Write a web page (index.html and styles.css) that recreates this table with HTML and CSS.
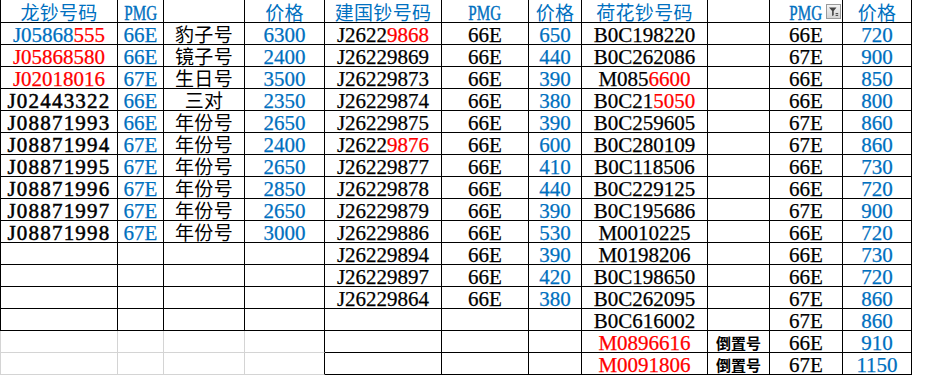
FILE: index.html
```html
<!DOCTYPE html>
<html lang="zh">
<head>
<meta charset="utf-8">
<title>钞号价格表</title>
<link rel="stylesheet" href="styles.css">
</head>
<body>
<div class="sheet">
  <!-- header -->
  <div class="c h b">龙钞号码</div>
  <div class="c b"><span class="pmg">PMG</span></div>
  <div class="c"></div>
  <div class="c h b">价格</div>
  <div class="c h b">建国钞号码</div>
  <div class="c b"><span class="pmg">PMG</span></div>
  <div class="c h b">价格</div>
  <div class="c h b">荷花钞号码</div>
  <div class="c"></div>
  <div class="c b"><span class="pmg">PMG</span><span class="filter"><svg viewBox="0 0 13 13" width="13" height="13"><path d="M2 2.5h7.5L6.7 6v4.2L5.1 11V6z" fill="#444"/><path d="M8.6 8.6h2.6M8.6 10.4h2.6" stroke="#444" stroke-width="1"/></svg></span></div>
  <div class="c h b">价格</div>

  <!-- row 1 -->
  <div class="c b">J05868<span class="r">555</span></div>
  <div class="c b">66E</div>
  <div class="c h">豹子号</div>
  <div class="c b">6300</div>
  <div class="c">J2622<span class="r">9868</span></div>
  <div class="c">66E</div>
  <div class="c b">650</div>
  <div class="c">B0C198220</div>
  <div class="c"></div>
  <div class="c">66E</div>
  <div class="c b">720</div>

  <!-- row 2 -->
  <div class="c r">J05868580</div>
  <div class="c b">66E</div>
  <div class="c h">镜子号</div>
  <div class="c b">2400</div>
  <div class="c">J26229869</div>
  <div class="c">66E</div>
  <div class="c b">440</div>
  <div class="c">B0C262086</div>
  <div class="c"></div>
  <div class="c">67E</div>
  <div class="c b">900</div>

  <!-- row 3 -->
  <div class="c r">J02018016</div>
  <div class="c b">67E</div>
  <div class="c h">生日号</div>
  <div class="c b">3500</div>
  <div class="c">J26229873</div>
  <div class="c">66E</div>
  <div class="c b">390</div>
  <div class="c">M085<span class="r">6600</span></div>
  <div class="c"></div>
  <div class="c">66E</div>
  <div class="c b">850</div>

  <!-- row 4 -->
  <div class="c wide">J02443322</div>
  <div class="c b">66E</div>
  <div class="c h">三对</div>
  <div class="c b">2350</div>
  <div class="c">J26229874</div>
  <div class="c">66E</div>
  <div class="c b">380</div>
  <div class="c">B0C21<span class="r">5050</span></div>
  <div class="c"></div>
  <div class="c">66E</div>
  <div class="c b">800</div>

  <!-- row 5 -->
  <div class="c wide">J08871993</div>
  <div class="c b">66E</div>
  <div class="c h">年份号</div>
  <div class="c b">2650</div>
  <div class="c">J26229875</div>
  <div class="c">66E</div>
  <div class="c b">390</div>
  <div class="c">B0C259605</div>
  <div class="c"></div>
  <div class="c">67E</div>
  <div class="c b">860</div>

  <!-- row 6 -->
  <div class="c wide">J08871994</div>
  <div class="c b">67E</div>
  <div class="c h">年份号</div>
  <div class="c b">2400</div>
  <div class="c">J2622<span class="r">9876</span></div>
  <div class="c">66E</div>
  <div class="c b">600</div>
  <div class="c">B0C280109</div>
  <div class="c"></div>
  <div class="c">67E</div>
  <div class="c b">860</div>

  <!-- row 7 -->
  <div class="c wide">J08871995</div>
  <div class="c b">67E</div>
  <div class="c h">年份号</div>
  <div class="c b">2650</div>
  <div class="c">J26229877</div>
  <div class="c">66E</div>
  <div class="c b">410</div>
  <div class="c">B0C118506</div>
  <div class="c"></div>
  <div class="c">66E</div>
  <div class="c b">730</div>

  <!-- row 8 -->
  <div class="c wide">J08871996</div>
  <div class="c b">67E</div>
  <div class="c h">年份号</div>
  <div class="c b">2850</div>
  <div class="c">J26229878</div>
  <div class="c">66E</div>
  <div class="c b">440</div>
  <div class="c">B0C229125</div>
  <div class="c"></div>
  <div class="c">66E</div>
  <div class="c b">720</div>

  <!-- row 9 -->
  <div class="c wide">J08871997</div>
  <div class="c b">67E</div>
  <div class="c h">年份号</div>
  <div class="c b">2650</div>
  <div class="c">J26229879</div>
  <div class="c">66E</div>
  <div class="c b">390</div>
  <div class="c">B0C195686</div>
  <div class="c"></div>
  <div class="c">67E</div>
  <div class="c b">900</div>

  <!-- row 10 -->
  <div class="c wide">J08871998</div>
  <div class="c b">67E</div>
  <div class="c h">年份号</div>
  <div class="c b">3000</div>
  <div class="c">J26229886</div>
  <div class="c">66E</div>
  <div class="c b">530</div>
  <div class="c">M0010225</div>
  <div class="c"></div>
  <div class="c">66E</div>
  <div class="c b">720</div>

  <!-- row 11 -->
  <div class="c"></div>
  <div class="c"></div>
  <div class="c"></div>
  <div class="c"></div>
  <div class="c">J26229894</div>
  <div class="c">66E</div>
  <div class="c b">390</div>
  <div class="c">M0198206</div>
  <div class="c"></div>
  <div class="c">66E</div>
  <div class="c b">730</div>

  <!-- row 12 -->
  <div class="c"></div>
  <div class="c"></div>
  <div class="c"></div>
  <div class="c"></div>
  <div class="c">J26229897</div>
  <div class="c">66E</div>
  <div class="c b">420</div>
  <div class="c">B0C198650</div>
  <div class="c"></div>
  <div class="c">66E</div>
  <div class="c b">720</div>

  <!-- row 13 -->
  <div class="c"></div>
  <div class="c"></div>
  <div class="c"></div>
  <div class="c"></div>
  <div class="c">J26229864</div>
  <div class="c">66E</div>
  <div class="c b">380</div>
  <div class="c">B0C262095</div>
  <div class="c"></div>
  <div class="c">67E</div>
  <div class="c b">860</div>

  <!-- row 14 -->
  <div class="c"></div>
  <div class="c"></div>
  <div class="c"></div>
  <div class="c"></div>
  <div class="c"></div>
  <div class="c"></div>
  <div class="c"></div>
  <div class="c">B0C616002</div>
  <div class="c"></div>
  <div class="c">67E</div>
  <div class="c b">860</div>

  <!-- row 15 -->
  <div class="c g"></div>
  <div class="c g"></div>
  <div class="c g"></div>
  <div class="c g k"></div>
  <div class="c"></div>
  <div class="c"></div>
  <div class="c"></div>
  <div class="c r">M0896616</div>
  <div class="c h small">倒置号</div>
  <div class="c">66E</div>
  <div class="c b">910</div>

  <!-- row 16 -->
  <div class="c g"></div>
  <div class="c g"></div>
  <div class="c g"></div>
  <div class="c g k"></div>
  <div class="c"></div>
  <div class="c"></div>
  <div class="c"></div>
  <div class="c r">M0091806</div>
  <div class="c h small">倒置号</div>
  <div class="c">67E</div>
  <div class="c b">1150</div>
</div>
</body>
</html>
```

FILE: styles.css
```css
html, body {
  margin: 0;
  padding: 0;
  background: #ffffff;
}

.sheet {
  display: grid;
  grid-template-columns: 118px 46px 81px 80px 117px 87px 53px 126px 62px 73px 69px;
  grid-template-rows: 23px repeat(16, 22px);
  width: 912px;
  font-family: "Liberation Serif", "Times New Roman", serif;
  font-size: 21px;
  color: #000000;
  -webkit-text-stroke: 0.25px currentColor;
}

.c {
  box-sizing: border-box;
  border-right: 1px solid #000000;
  border-bottom: 1px solid #000000;
  display: flex;
  align-items: flex-end;
  justify-content: center;
  line-height: 17px;
  white-space: nowrap;
  position: relative;
}

.sheet > .c:nth-child(11n+1) {
  border-left: 1px solid #000000;
}

.c.g {
  border-right-color: #d4d4d4;
  border-bottom-color: #d4d4d4;
}

.sheet > .c.g:nth-child(11n+1) {
  border-left-color: #d4d4d4;
}

.c.g.k {
  border-right-color: #000000;
}

.b {
  color: #0070c0;
}

.r {
  color: #ff0000;
}

.wide {
  letter-spacing: 1.2px;
  -webkit-text-stroke: 0.5px currentColor;
}

.h {
  font-family: "Noto Sans CJK SC", "Noto Sans", sans-serif;
  font-size: 19px;
  line-height: 20px;
  letter-spacing: 0.3px;
  -webkit-text-stroke: 0;
}

.h.small {
  font-size: 15px;
  font-weight: 700;
  line-height: 17px;
  letter-spacing: 0;
  padding-bottom: 1px;
}

.pmg {
  display: inline-block;
  transform: scaleX(0.72);
  -webkit-text-stroke: 0.4px currentColor;
}

.filter {
  position: absolute;
  right: 1px;
  top: 4px;
  width: 13px;
  height: 13px;
  border: 1px solid #9a9a9a;
  background: linear-gradient(#f4f4f4, #d4d4d4);
  line-height: 0;
  -webkit-text-stroke: 0;
}

.filter svg {
  display: block;
}
```
